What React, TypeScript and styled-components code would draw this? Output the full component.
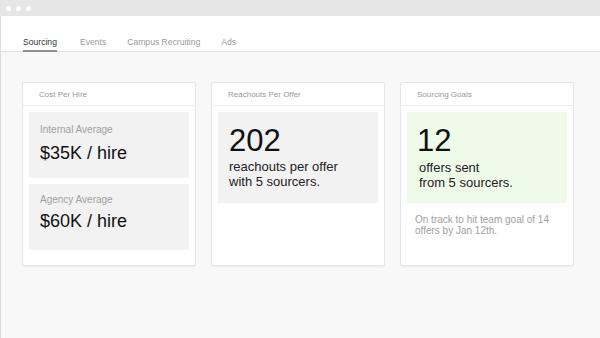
import React from 'react';
import styled, { createGlobalStyle } from 'styled-components';

const GlobalStyle = createGlobalStyle`
  html, body {
    margin: 0;
    padding: 0;
    height: 100%;
    background: #f8f8f8;
    font-family: "Liberation Sans", Arial, Helvetica, sans-serif;
  }
  #root {
    height: 100%;
  }
`;

const Window = styled.div`
  height: 100vh;
  display: flex;
  flex-direction: column;
  background: #f8f8f8;
  overflow: hidden;
`;

const TitleBar = styled.div`
  height: 16px;
  flex-shrink: 0;
  background: #e6e6e6;
  display: flex;
  align-items: center;
  gap: 5px;
  padding-left: 6px;
`;

const Dot = styled.span`
  width: 5px;
  height: 5px;
  border-radius: 50%;
  background: #ffffff;
`;

const Body = styled.div`
  flex: 1;
  display: flex;
  flex-direction: column;
  border-left: 1px solid #dcdcdc;
`;

const Tabs = styled.nav`
  height: 35px;
  flex-shrink: 0;
  background: #ffffff;
  border-bottom: 1px solid #e2e2e2;
  display: flex;
  align-items: flex-end;
  gap: 21px;
  padding-left: 22px;
`;

const Tab = styled.div<{ $active?: boolean }>`
  font-size: 8.6px;
  line-height: 10px;
  padding-bottom: 3px;
  color: ${p => (p.$active ? '#333333' : '#9a9a9a')};
  border-bottom: 2px solid ${p => (p.$active ? '#8f8f8f' : 'transparent')};
  margin-bottom: -1px;
  margin-right: ${p => (p.$active ? '2px' : '0')};
`;

const Content = styled.main`
  display: flex;
  align-items: stretch;
  gap: 15px;
  padding: 30px 0 0 21px;
`;

const Card = styled.section`
  width: 174px;
  box-sizing: border-box;
  background: #ffffff;
  border: 1px solid #e6e6e6;
  border-radius: 2px;
  box-shadow: 0 1px 1px rgba(0, 0, 0, 0.04);
  display: flex;
  flex-direction: column;
`;

const CardHeader = styled.header`
  height: 22px;
  display: flex;
  align-items: center;
  padding-left: 16px;
  font-size: 8px;
  color: #999999;
  border-bottom: 1px solid #ececec;
`;

const CardBody = styled.div`
  display: flex;
  flex-direction: column;
  gap: 6px;
  padding: 6px 6px 15px;
`;

const StatBox = styled.div<{ $tight?: boolean }>`
  height: 66px;
  box-sizing: border-box;
  background: #f2f2f2;
  padding: ${p => (p.$tight ? '10px' : '12px')} 11px 0;
  display: flex;
  flex-direction: column;
  gap: ${p => (p.$tight ? '5px' : '7px')};
`;

const StatLabel = styled.div`
  font-size: 10px;
  line-height: 12px;
  color: #a0a0a0;
`;

const StatValue = styled.div`
  font-size: 18px;
  line-height: 20px;
  color: #111111;
`;

const BigBox = styled.div<{ $green?: boolean }>`
  height: 91px;
  box-sizing: border-box;
  background: ${p => (p.$green ? '#eefbe8' : '#f2f2f2')};
  padding: 13px 11px 0 ${p => (p.$green ? '10px' : '11px')};
`;

const BigNumber = styled.div`
  font-size: 31px;
  line-height: 31px;
  color: #111111;
`;

const BigText = styled.div<{ $indent?: boolean }>`
  font-size: 13px;
  line-height: 15px;
  color: #222222;
  margin-top: ${p => (p.$indent ? '4px' : '3px')};
  padding-left: ${p => (p.$indent ? '2px' : '0')};
`;

const Note = styled.p`
  margin: 5px 0 0 8px;
  font-size: 10px;
  line-height: 11px;
  color: #a0a0a0;
`;

const App: React.FC = () => {
  return (
    <Window>
      <GlobalStyle />
      <TitleBar>
        <Dot />
        <Dot />
        <Dot />
      </TitleBar>
      <Body>
        <Tabs>
          <Tab $active>Sourcing</Tab>
          <Tab>Events</Tab>
          <Tab>Campus Recruiting</Tab>
          <Tab>Ads</Tab>
        </Tabs>
        <Content>
          <Card>
            <CardHeader>Cost Per Hire</CardHeader>
            <CardBody>
              <StatBox>
                <StatLabel>Internal Average</StatLabel>
                <StatValue>$35K / hire</StatValue>
              </StatBox>
              <StatBox $tight>
                <StatLabel>Agency Average</StatLabel>
                <StatValue>$60K / hire</StatValue>
              </StatBox>
            </CardBody>
          </Card>
          <Card>
            <CardHeader>Reachouts Per Offer</CardHeader>
            <CardBody>
              <BigBox>
                <BigNumber>202</BigNumber>
                <BigText>
                  reachouts per offer
                  <br />
                  with 5 sourcers.
                </BigText>
              </BigBox>
            </CardBody>
          </Card>
          <Card>
            <CardHeader>Sourcing Goals</CardHeader>
            <CardBody>
              <BigBox $green>
                <BigNumber>12</BigNumber>
                <BigText $indent>
                  offers sent
                  <br />
                  from 5 sourcers.
                </BigText>
              </BigBox>
              <Note>
                On track to hit team goal of 14
                <br />
                offers by Jan 12th.
              </Note>
            </CardBody>
          </Card>
        </Content>
      </Body>
    </Window>
  );
};

export default App;
